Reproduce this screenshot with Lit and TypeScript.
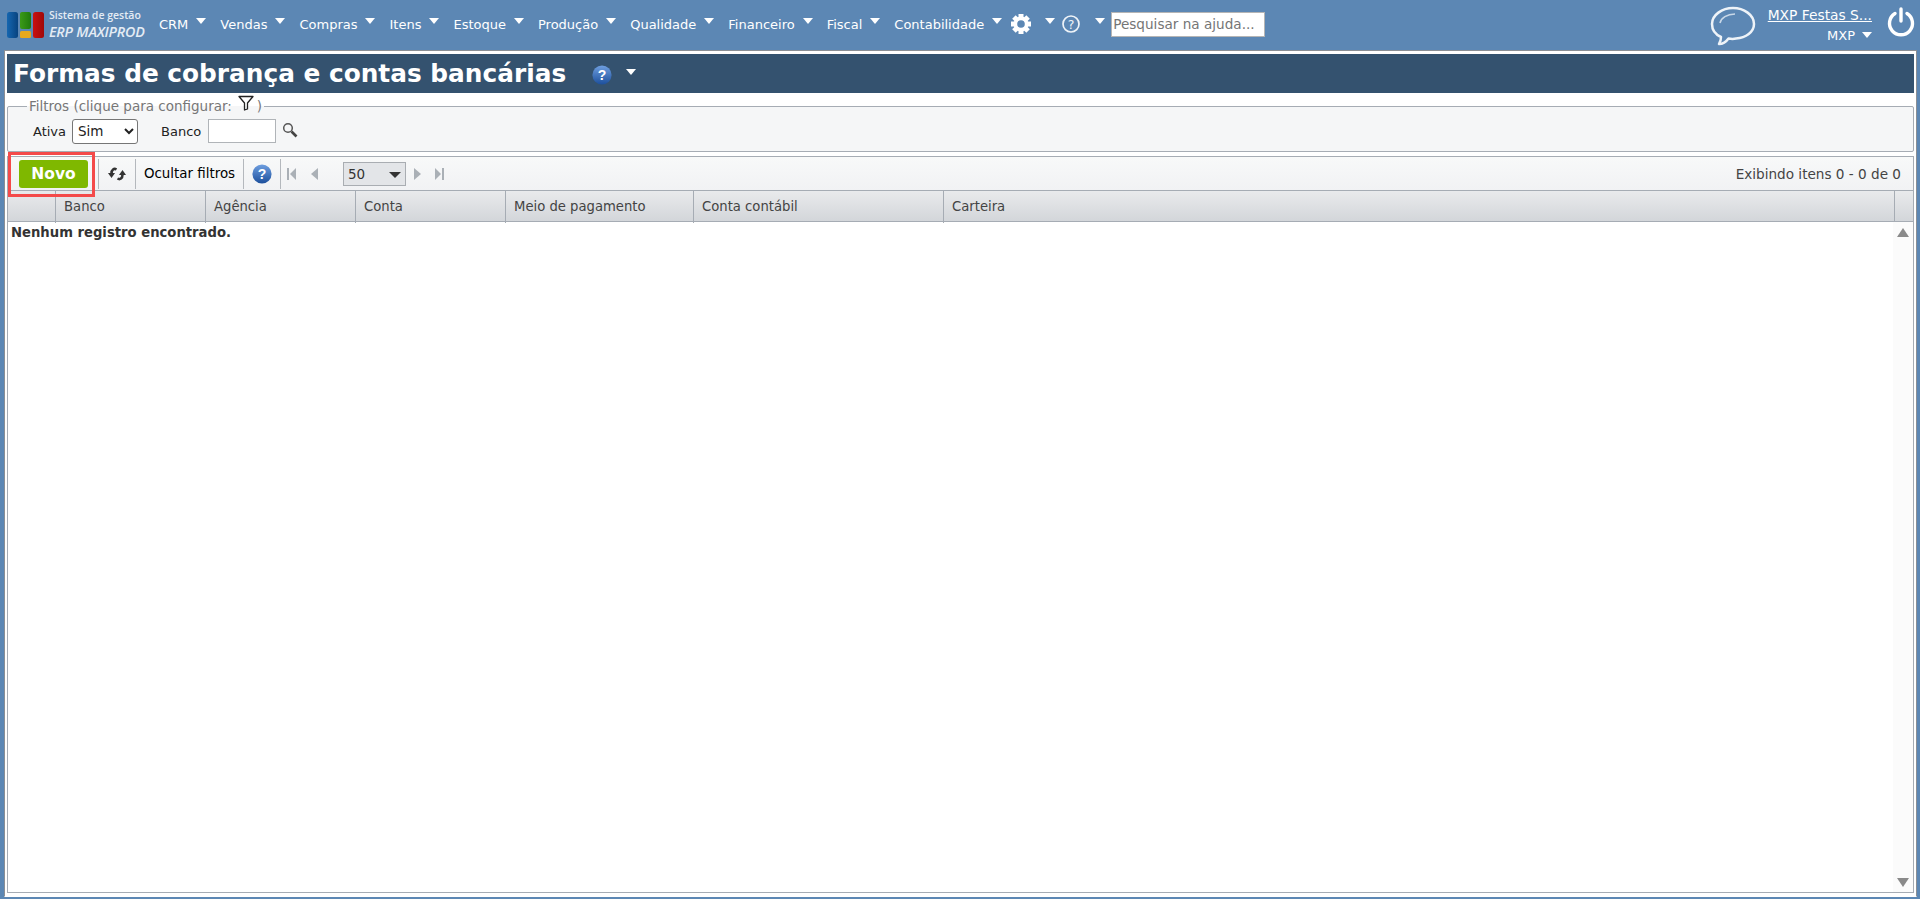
import { LitElement, html, css, svg } from "lit";
import { customElement } from "lit/decorators.js";

const MENU = ["CRM", "Vendas", "Compras", "Itens", "Estoque", "Produção", "Qualidade", "Financeiro", "Fiscal", "Contabilidade"];
const COLS = ["", "Banco", "Agência", "Conta", "Meio de pagamento", "Conta contábil", "Carteira", ""];

const helpBlue = html`<svg viewBox="0 0 20 20" width="20" height="20">
  <defs><linearGradient id="hb" x1="0" y1="0" x2="0" y2="1"><stop offset="0" stop-color="#6f9fe0"/><stop offset="1" stop-color="#1c4f9c"/></linearGradient></defs>
  <circle cx="10" cy="10" r="9.6" fill="url(#hb)"/>
  <text x="10" y="15" text-anchor="middle" font-family="Liberation Sans" font-weight="700" font-size="14" fill="#fff">?</text>
</svg>`;

const caret = html`<span class="caret"></span>`;

const teeth = [0, 45, 90, 135, 180, 225, 270, 315];
const gear = svg`
  ${teeth.map((a) => svg`<rect x="7.500" y="0" width="5" height="5" fill="#fff" transform="rotate(${a} 10 10)"/>`)}
  <circle cx="10" cy="10" r="5.600" fill="none" stroke="#fff" stroke-width="3.600"/>`;

@customElement("app-root")
export class AppRoot extends LitElement {
  static styles = css`
    :host {
      display: block;
      height: 899px;
      overflow: hidden;
      background: #5c87b4;
      font-family: "DejaVu Sans", Verdana, sans-serif;
      font-size: 12px;
      color: #333;
    }
    .top {
      height: 50px;
      display: flex;
      align-items: flex-start;
      box-sizing: border-box;
    }
    .logo {
      display: flex;
      align-items: flex-start;
      margin: 12px 0 0 7px;
      width: 152px;
      flex: none;
    }
    .logo svg { flex: none; }
    .logo-text {
      margin-left: 5px;
      margin-top: -4px;
      font-family: "Open Sans", sans-serif;
      color: #e4ecf4;
      white-space: nowrap;
    }
    .logo-text .l1 { font-size: 10.500px; font-weight: 600; line-height: 15px; }
    .logo-text .l2 { font-size: 14.300px; font-weight: 600; font-style: italic; line-height: 17px; letter-spacing: -0.2px; }
    .menu {
      display: flex;
      align-items: center;
      height: 24px;
      margin-top: 12px;
      color: #fff;
      font-size: 13px;
    }
    .mi { display: flex; align-items: center; margin-right: 14px; white-space: nowrap; }
    .mi .caret { margin-left: 8px; margin-top: -6px; }
    .caret {
      display: inline-block;
      width: 0;
      height: 0;
      border-left: 5.500px solid transparent;
      border-right: 5.500px solid transparent;
      border-top: 6px solid #fff;
      flex: none;
    }
    .gear { display: flex; align-items: center; margin-left: -5px; }
    .gear .caret { margin-left: 14px; margin-top: -6px; }
    .qmark { display: flex; align-items: center; margin-left: 7px; }
    .qmark .caret { margin-left: 15px; margin-top: -6px; }
    .search {
      box-sizing: border-box;
      width: 154px;
      height: 25px;
      margin-left: 6px;
      border: 1px solid #b5b5b5;
      background: #fff;
      color: #757575;
      font-size: 13.600px;
      line-height: 23px;
      padding-left: 1px;
      white-space: nowrap;
    }
    .right {
      margin-left: auto;
      display: flex;
      align-items: flex-start;
      color: #fff;
    }
    .bubble { margin: 6px 12px 0 0; }
    .user { display: flex; flex-direction: column; align-items: flex-end; margin-top: 7px; font-size: 13.800px; line-height: 16px; }
    .user a { color: #fff; text-decoration: underline; }
    .user .sub { display: flex; align-items: center; margin-top: 5px; font-size: 13px; }
    .user .sub .caret { margin-left: 7px; margin-top: -3px; }
    .power { margin: 7px 5px 0 15px; }
    .main {
      height: 847px;
      margin: 0 3px 0 4px;
      box-sizing: border-box;
      border: 1px solid #8b8f95;
      border-bottom-color: #fff;
      background: #fff;
      padding: 3px 2px 3px 2px;
      display: flex;
      flex-direction: column;
      position: relative;
    }
    .title {
      height: 39px;
      flex: none;
      background: #34526f;
      color: #fff;
      display: flex;
      align-items: center;
      padding-left: 6px;
    }
    h1 { margin: 0; font-size: 24.800px; font-weight: 700; line-height: 39px; white-space: nowrap; }
    .title svg { margin-left: 26px; margin-top: 3px; }
    .title .caret { margin-left: 14px; margin-top: -3px; }
    fieldset {
      margin: 5px 0 0;
      padding: 0 0 0 25px;
      height: 54px;
      box-sizing: border-box;
      flex: none;
      border: 1px solid #a6acb4;
      border-radius: 2px;
      background: #f5f6f7;
      display: flex;
      min-inline-size: 0;
    }
    legend {
      padding: 0 2px;
      margin-left: -6px;
      color: #777;
      font-size: 13.500px;
      line-height: 16px;
      display: flex;
      align-items: center;
    }
    legend svg { margin: -6px 3px 0 6px; }
    .filters {
      display: flex;
      align-items: center;
      height: 26px;
      margin-top: 4px;
      color: #222;
      font-size: 13px;
    }
    .sel {
      box-sizing: border-box;
      width: 66px;
      height: 25px;
      margin-left: 6px;
      border: 1px solid #767676;
      border-radius: 3px;
      background: #fff;
      font-family: inherit;
      font-size: 13.500px;
      color: #222;
      padding-left: 1px;
    }
    .lbl2 { margin-left: 23px; }
    .inp {
      box-sizing: border-box;
      width: 68px;
      height: 24px;
      margin-left: 7px;
      border: 1px solid #b0b4b8;
      background: #fff;
    }
    .filters svg { margin-left: 6px; margin-top: -3px; }
    .toolbar {
      margin-top: 4px;
      flex: none;
      height: 34px;
      box-sizing: border-box;
      display: flex;
      align-items: center;
      border: 1px solid #a6acb4;
      border-bottom: none;
      background: linear-gradient(#f8f9f9, #f1f2f4);
      padding-left: 11px;
    }
    .novo {
      box-sizing: border-box;
      width: 69px;
      height: 28px;
      border-radius: 3px;
      border: none;
      background: #7fb800;
      color: #fff;
      font-family: inherit;
      font-weight: 700;
      font-size: 15.500px;
      padding: 0;
      margin-right: 10px;
      flex: none;
    }
    .tb {
      height: 30px;
      display: flex;
      align-items: center;
      justify-content: center;
      border-left: 1px solid #b4b8bd;
      box-sizing: border-box;
      flex: none;
      color: #000;
      font-size: 13.400px;
      white-space: nowrap;
    }
    .tb.refresh { width: 37px; }
    .tb.hide { width: 108px; }
    .tb.help { width: 37px; }
    .pager { display: flex; align-items: center; border-left: 1px solid #b4b8bd; height: 30px; }
    .pg { margin-left: 6px; flex: none; }
    .size {
      box-sizing: border-box;
      width: 63px;
      height: 24px;
      margin-left: 25px;
      margin-right: 2px;
      border: 1px solid #a9adb2;
      background: #e3e5e8;
      color: #333;
      font-size: 13.500px;
      display: flex;
      align-items: center;
      justify-content: space-between;
      padding: 0 4px 0 4px;
    }
    .size i {
      width: 0;
      height: 0;
      border-left: 6px solid transparent;
      border-right: 6px solid transparent;
      border-top: 6px solid #333;
      margin-top: 3px;
    }
    .count { margin-left: auto; margin-right: 12px; color: #444; font-size: 13.600px; }
    .head {
      flex: none;
      display: grid;
      grid-template-columns: 47px 150px 150px 150px 188px 250px 1fr 19px;
      height: 32px;
      box-sizing: border-box;
      border: 1px solid #a6acb4;
      background: linear-gradient(#e9eaec, #d3d6da);
      color: #444;
      font-size: 13.200px;
      line-height: 32px;
    }
    .head div { padding-left: 8px; border-left: 1px solid #a6acb4; white-space: nowrap; }
    .head div:first-child { border-left: none; padding: 0; }
    .body {
      flex: 1;
      border: 1px solid #a6acb4;
      border-top: none;
      display: flex;
      min-height: 0;
    }
    .rows {
      flex: 1;
      padding: 3px 0 0 3px;
      font-weight: 700;
      font-size: 13.200px;
      line-height: 16px;
      color: #333;
    }
    .scroll {
      width: 20px;
      background: #fbfbfb;
      display: flex;
      flex-direction: column;
      justify-content: space-between;
      align-items: center;
      padding: 6px 0 5px;
      box-sizing: border-box;
    }
    .scroll i { width: 0; height: 0; border-left: 6.500px solid transparent; border-right: 6.500px solid transparent; }
    .scroll .u { border-bottom: 9px solid #8a8a8a; }
    .scroll .d { border-top: 9px solid #8a8a8a; }
    .highlight {
      position: absolute;
      left: 3px;
      top: 101px;
      width: 87px;
      height: 45px;
      box-sizing: border-box;
      border: 3px solid #f44a4a;
      pointer-events: none;
    }
  `;

  render() {
    return html`
      <div class="top">
        <div class="logo">
          <svg width="37" height="26" viewBox="0 0 37 26">
            <defs>
              <linearGradient id="lb" x1="0" y1="0" x2="1" y2="0"><stop offset="0" stop-color="#1566b0"/><stop offset="1" stop-color="#08437f"/></linearGradient>
              <linearGradient id="lg" x1="0" y1="0" x2="1" y2="0"><stop offset="0" stop-color="#3b9a18"/><stop offset="1" stop-color="#1f7a0c"/></linearGradient>
              <linearGradient id="lr" x1="0" y1="0" x2="1" y2="0"><stop offset="0" stop-color="#c91010"/><stop offset="1" stop-color="#a00808"/></linearGradient>
            </defs>
            <rect x="0" y="0" width="11" height="26" rx="2.500" fill="url(#lb)"/>
            <rect x="13" y="0" width="11" height="17" rx="2" fill="url(#lg)"/>
            <rect x="13" y="19" width="11" height="7" rx="1.500" fill="#e8a91c"/>
            <rect x="26" y="0" width="11" height="26" rx="2.500" fill="url(#lr)"/>
          </svg>
          <div class="logo-text"><div class="l1">Sistema de gestão</div><div class="l2">ERP MAXIPROD</div></div>
        </div>
        <nav class="menu">
          ${MENU.map((m) => html`<div class="mi"><span>${m}</span>${caret}</div>`)}
          <div class="gear"><svg width="20" height="20" viewBox="0 0 20 20">${gear}</svg>${caret}</div>
          <div class="qmark">
            <svg width="18" height="18" viewBox="0 0 18 18"><circle cx="9" cy="9" r="8" fill="none" stroke="#eef3f8" stroke-width="1.700"/><text x="9" y="13.500" text-anchor="middle" font-family="DejaVu Sans" font-size="12.500" fill="#eef3f8">?</text></svg>
            ${caret}
          </div>
          <div class="search">Pesquisar na ajuda...</div>
        </nav>
        <div class="right">
          <svg class="bubble" width="46" height="40" viewBox="0 0 46 40" fill="none" stroke="#eef3f8" stroke-width="2.500">
            <path d="M9 38c3 0 7-2 9.500-5.500C21 33 24 33 26 32.500c10-.8 18-6.500 18-14.500C44 9 34 2 23 2S2 9 2 18c0 5.500 3.500 10.500 9 13 0 3-1 5.500-2 7z" stroke-linejoin="round"/>
            <path d="M10 17c1-5 7-9 15-9" stroke-width="1.600" stroke="#c9d8e8"/>
          </svg>
          <div class="user">
            <a>MXP Festas S...</a>
            <div class="sub"><span>MXP</span>${caret}</div>
          </div>
          <svg class="power" width="28" height="30" viewBox="0 0 28 30" fill="none" stroke="#fff" stroke-width="3.400" stroke-linecap="round">
            <path d="M14 2v12"/>
            <path d="M8 6.500a11.500 11.500 0 1 0 12 0"/>
          </svg>
        </div>
      </div>
      <div class="main">
        <div class="title">
          <h1>Formas de cobrança e contas bancárias</h1>
          ${helpBlue}
          ${caret}
        </div>
        <fieldset>
          <legend>Filtros (clique para configurar:
            <svg width="16" height="16" viewBox="0 0 16 16" fill="none" stroke="#222" stroke-width="1.300"><path d="M1 1.500h14L9.500 8v6L6.500 15V8z" stroke-linejoin="round"/></svg>)
          </legend>
          <div class="filters">
            <span>Ativa</span>
            <select class="sel"><option>Sim</option></select>
            <span class="lbl2">Banco</span>
            <input class="inp" />
            <svg width="16" height="16" viewBox="0 0 16 16" fill="none" stroke="#555"><circle cx="6" cy="6" r="4.300" stroke-width="1.500"/><path d="M9.500 9.500l5 5" stroke-width="2.600" stroke="#444"/></svg>
          </div>
        </fieldset>
        <div class="toolbar">
          <button class="novo">Novo</button>
          <div class="tb refresh">
            <svg width="18" height="14" viewBox="0 0 18 14" fill="none" stroke="#333" stroke-width="2.600">
              <path d="M8.500 2.500C6 1 3.500 2.500 3.500 6.500"/>
              <path d="M0 6h7l-3.500 5z" fill="#333" stroke="none"/>
              <path d="M9.500 11.500C12 13 14.500 11.500 14.500 7.500"/>
              <path d="M11 8h7l-3.500-5z" fill="#333" stroke="none"/>
            </svg>
          </div>
          <div class="tb hide">Ocultar filtros</div>
          <div class="tb help">${helpBlue}</div>
          <div class="pager">
            <svg class="pg" width="10" height="12" viewBox="0 0 10 12" fill="#aab0b6"><rect x="0" y="0" width="2" height="12"/><path d="M9 0v12L3 6z"/></svg>
            <svg class="pg" style="margin-left:14px" width="7" height="12" viewBox="0 0 7 12" fill="#aab0b6"><path d="M7 0v12L0 6z"/></svg>
            <div class="size"><span>50</span><i></i></div>
            <svg class="pg" width="7" height="12" viewBox="0 0 7 12" fill="#aab0b6"><path d="M0 0v12l7-6z"/></svg>
            <svg class="pg" style="margin-left:13px" width="10" height="12" viewBox="0 0 10 12" fill="#aab0b6"><path d="M1 0v12l6-6z"/><rect x="8" y="0" width="2" height="12"/></svg>
          </div>
          <div class="count">Exibindo itens 0 - 0 de 0</div>
        </div>
        <div class="head">${COLS.map((c) => html`<div>${c}</div>`)}</div>
        <div class="body">
          <div class="rows">Nenhum registro encontrado.</div>
          <div class="scroll"><i class="u"></i><i class="d"></i></div>
        </div>
        <div class="highlight"></div>
      </div>
    `;
  }
}
